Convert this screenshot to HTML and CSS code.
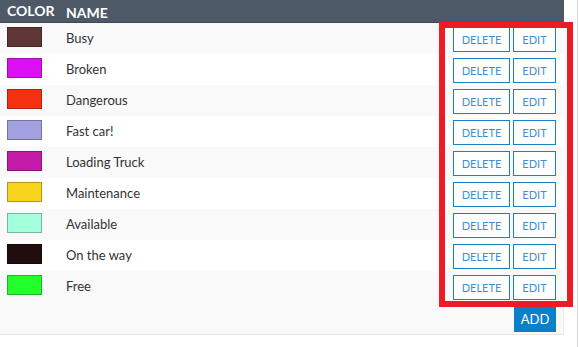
FILE: index.html
```html
<!DOCTYPE html>
<html lang="en">

<head>
  <meta charset="UTF-8" />
  <title>Statuses</title>
  <link rel="stylesheet" href="styles.css">
</head>

<body>
  <div class="page">
    <div class="panel">
      <table class="status-table">
        <thead>
          <tr>
            <th class="col-color">COLOR</th>
            <th class="col-name">NAME</th>
            <th class="col-actions"></th>
          </tr>
        </thead>
        <tbody>
          <tr>
            <td class="col-color"><span class="swatch" style="background:#5e3636"></span></td>
            <td class="col-name">Busy</td>
            <td class="col-actions"><button class="btn btn-outline btn-delete">DELETE</button><button class="btn btn-outline btn-edit">EDIT</button></td>
          </tr>
          <tr>
            <td class="col-color"><span class="swatch" style="background:#dd0ff5"></span></td>
            <td class="col-name">Broken</td>
            <td class="col-actions"><button class="btn btn-outline btn-delete">DELETE</button><button class="btn btn-outline btn-edit">EDIT</button></td>
          </tr>
          <tr>
            <td class="col-color"><span class="swatch" style="background:#f53112"></span></td>
            <td class="col-name">Dangerous</td>
            <td class="col-actions"><button class="btn btn-outline btn-delete">DELETE</button><button class="btn btn-outline btn-edit">EDIT</button></td>
          </tr>
          <tr>
            <td class="col-color"><span class="swatch" style="background:#a3a0e0"></span></td>
            <td class="col-name">Fast car!</td>
            <td class="col-actions"><button class="btn btn-outline btn-delete">DELETE</button><button class="btn btn-outline btn-edit">EDIT</button></td>
          </tr>
          <tr>
            <td class="col-color"><span class="swatch" style="background:#c41aa8"></span></td>
            <td class="col-name">Loading Truck</td>
            <td class="col-actions"><button class="btn btn-outline btn-delete">DELETE</button><button class="btn btn-outline btn-edit">EDIT</button></td>
          </tr>
          <tr>
            <td class="col-color"><span class="swatch" style="background:#f7d31c"></span></td>
            <td class="col-name">Maintenance</td>
            <td class="col-actions"><button class="btn btn-outline btn-delete">DELETE</button><button class="btn btn-outline btn-edit">EDIT</button></td>
          </tr>
          <tr>
            <td class="col-color"><span class="swatch" style="background:#a3ffdc"></span></td>
            <td class="col-name">Available</td>
            <td class="col-actions"><button class="btn btn-outline btn-delete">DELETE</button><button class="btn btn-outline btn-edit">EDIT</button></td>
          </tr>
          <tr>
            <td class="col-color"><span class="swatch" style="background:#220d0e"></span></td>
            <td class="col-name">On the way</td>
            <td class="col-actions"><button class="btn btn-outline btn-delete">DELETE</button><button class="btn btn-outline btn-edit">EDIT</button></td>
          </tr>
          <tr>
            <td class="col-color"><span class="swatch" style="background:#22ff2c"></span></td>
            <td class="col-name">Free</td>
            <td class="col-actions"><button class="btn btn-outline btn-delete">DELETE</button><button class="btn btn-outline btn-edit">EDIT</button></td>
          </tr>
        </tbody>
      </table>

      <div class="panel-footer">
        <button class="btn btn-primary">ADD</button>
      </div>
    </div>

    <!-- annotation box around the action buttons -->
    <div class="highlight"></div>
  </div>
</body>

</html>
```

FILE: styles.css
```css
* {
  box-sizing: border-box;
  margin: 0;
  padding: 0;
}

body {
  font-family: Lato, "Open Sans", sans-serif;
  background: #ffffff;
  color: #333333;
}

.page {
  position: relative;
  width: 578px;
  height: 347px;
  border-right: 1px solid #d4d4d4;
}

.panel {
  width: 564px;
}

.status-table {
  width: 100%;
  border-collapse: collapse;
}

.status-table th {
  background: #4d5966;
  color: #ffffff;
  font-size: 14px;
  font-weight: 700;
  text-align: left;
  height: 23px;
  padding: 2px 0 0 0;
  box-shadow: inset 0 -1px 0 #3f4954;
}

.status-table td {
  height: 31px;
  padding: 0;
  font-size: 13px;
}

.status-table tbody tr:nth-child(odd) {
  background: #f9f9f9;
}

.col-color {
  width: 58px;
  padding-left: 7px !important;
  vertical-align: top;
}

td.col-color {
  padding-top: 4px !important;
}

.col-name {
  padding-left: 8px !important;
  vertical-align: middle;
}

td.col-name {
  padding-bottom: 1px !important;
}

.col-actions {
  width: 120px;
  text-align: right;
  vertical-align: top;
  padding-right: 8px !important;
  white-space: nowrap;
}

td.col-actions {
  padding-top: 4px !important;
}

.swatch {
  display: block;
  width: 35px;
  height: 20px;
  border: 1px solid rgba(0, 0, 0, 0.28);
}

.btn {
  font-family: Lato, "Open Sans", sans-serif;
  height: 25px;
  font-size: 11px;
  cursor: pointer;
  vertical-align: top;
}

.btn-outline {
  background: #ffffff;
  border: 1px solid #1b80c4;
  color: #3d8fd6;
  padding: 0;
  margin-left: 3px;
}

.btn-outline:first-child {
  margin-left: 0;
}

.btn-delete {
  width: 57px;
}

.btn-edit {
  width: 43px;
}

.btn-primary {
  background: #0b7fc7;
  border: 1px solid #0b7fc7;
  color: #ffffff;
  font-size: 13px;
  width: 42px;
  height: 26px;
}

.panel-footer {
  background: #f9f9f9;
  height: 33px;
  padding: 4px 7px 0 0;
  text-align: right;
  border-right: 1px solid #ececec;
  border-bottom: 1px solid #e6e6e6;
}

.highlight {
  position: absolute;
  left: 439px;
  top: 22px;
  width: 134px;
  height: 285px;
  border: 6px solid #ed1c24;
  pointer-events: none;
}
```
